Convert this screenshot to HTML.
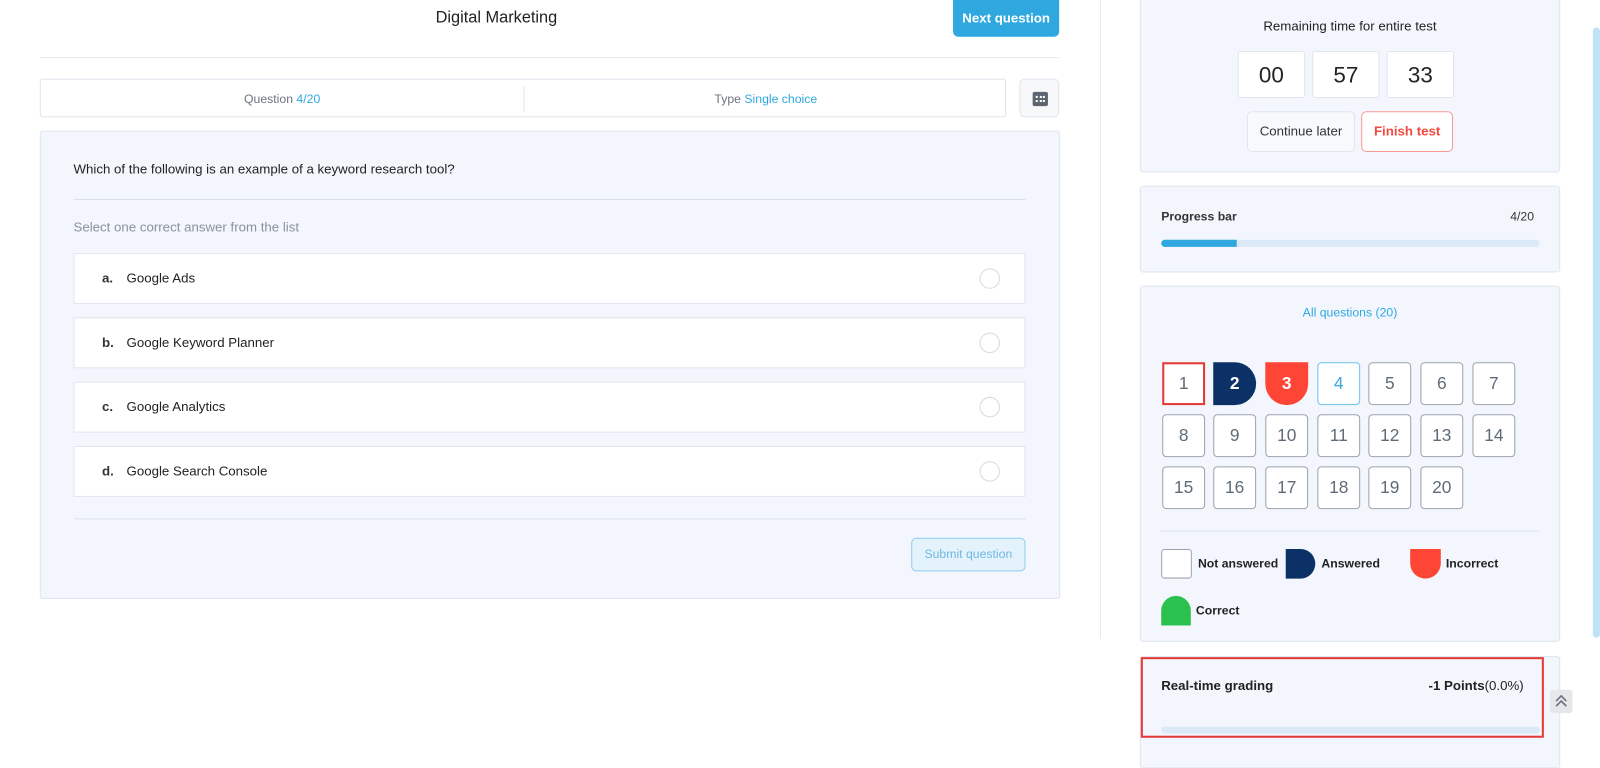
<!DOCTYPE html>
<html><head><meta charset="utf-8"><style>
*{box-sizing:border-box;margin:0;padding:0}
body{width:1600px;height:738px;overflow:hidden;background:#fff;font-family:"Liberation Sans",sans-serif;color:#1f2937;position:relative}
#w{position:absolute;left:0;top:0;width:1568px;height:724px;transform:scale(1.0204);transform-origin:0 0}
.a{position:absolute}
.card{position:absolute;background:#f3f7fd;border:1px solid #dfe5ee;border-radius:3px}
.opt{position:absolute;left:72px;width:933px;height:50px;background:#fff;border:1px solid #dfe5ee;font-size:13px;color:#222}
.opt b{position:absolute;left:27px;top:16px;font-weight:bold;color:#333;font-size:13px}
.opt span{position:absolute;left:51px;top:16px}
.opt i{position:absolute;left:887px;top:14px;width:20px;height:20px;border:1px solid #d4dbe4;border-radius:50%}
.q{position:absolute;width:42px;height:42px;background:#fff;border:1px solid #9aa3ad;border-radius:4px;font-size:17px;color:#5f6b77;text-align:center;line-height:40px}
.tb{position:absolute;top:50px;width:66px;height:46px;background:#fff;border:1px solid #e1e6ee;border-radius:3px;font-size:22px;text-align:center;line-height:46px;color:#222}
.lg{position:absolute;font-size:12px;font-weight:bold;color:#222}
</style></head><body><div id="w">
<div class="a" style="left:0;width:973px;top:9px;text-align:center;font-size:16px;color:#222">Digital Marketing</div>
<div class="a" style="left:934px;top:0;width:104px;height:36px;background:#2ea8df;border-radius:0 0 5px 5px;color:#fff;font-size:13px;font-weight:bold;text-align:center;line-height:36px">Next question</div>
<div class="a" style="left:39px;top:56px;width:999px;height:1px;background:#e3e7ee"></div>
<div class="a" style="left:39px;top:77px;width:947px;height:38px;border:1px solid #dfe5ee;border-radius:3px;font-size:12px;color:#6b7480">
 <div class="a" style="left:0;width:473px;top:12px;text-align:center">Question <span style="color:#2ea8df">4/20</span></div>
 <div class="a" style="left:473px;top:6px;width:1px;height:26px;background:#dfe5ee"></div>
 <div class="a" style="left:474px;width:473px;top:12px;text-align:center">Type <span style="color:#2ea8df">Single choice</span></div>
</div>
<div class="a" style="left:999px;top:77px;width:39px;height:38px;border:1px solid #dfe5ee;border-radius:5px;background:#f7f8fa">
 <div class="a" style="left:12px;top:12px;width:15px;height:14px;background:#5d6670;border-radius:2px"></div>
 <div class="a" style="left:15px;top:16px;width:9px;height:2px;border-left:2px solid #fff;border-right:2px solid #fff"></div>
 <div class="a" style="left:18.5px;top:16px;width:2px;height:2px;background:#fff"></div>
 <div class="a" style="left:15px;top:20px;width:9px;height:2px;border-left:2px solid #fff;border-right:2px solid #fff"></div>
 <div class="a" style="left:18.5px;top:20px;width:2px;height:2px;background:#fff"></div>
</div>
<div class="card" style="left:39px;top:128px;width:1000px;height:459px"></div>
<div class="a" style="left:72px;top:158px;font-size:13px;color:#222">Which of the following is an example of a keyword research tool?</div>
<div class="a" style="left:72px;top:195px;width:933px;height:1px;background:#dbe1ea"></div>
<div class="a" style="left:72px;top:215px;font-size:13px;color:#8a929b">Select one correct answer from the list</div>
<div class="opt" style="top:248px"><b>a.</b><span>Google Ads</span><i></i></div>
<div class="opt" style="top:311px"><b>b.</b><span>Google Keyword Planner</span><i></i></div>
<div class="opt" style="top:374px"><b>c.</b><span>Google Analytics</span><i></i></div>
<div class="opt" style="top:437px"><b>d.</b><span>Google Search Console</span><i></i></div>
<div class="a" style="left:72px;top:508px;width:933px;height:1px;background:#dbe1ea"></div>
<div class="a" style="left:893px;top:527px;width:112px;height:33px;background:#e4f2fb;border:1px solid #8ccdf0;border-radius:5px;color:#6fb8e2;font-size:12px;text-align:center;line-height:31px">Submit question</div>
<div class="a" style="left:1078px;top:0;width:1px;height:626px;background:#e6e9ee"></div>

<div class="card" style="left:1117px;top:-4px;width:412px;height:173px"></div>
<div class="a" style="left:1117px;width:412px;top:18px;text-align:center;font-size:13px;color:#222">Remaining time for entire test</div>
<div class="tb" style="left:1213px">00</div><div class="tb" style="left:1286px">57</div><div class="tb" style="left:1359px">33</div>
<div class="a" style="left:1222px;top:109px;width:106px;height:40px;border:1px solid #dfe5ee;border-radius:5px;background:#f7f9fc;font-size:13px;text-align:center;line-height:38px;color:#333">Continue later</div>
<div class="a" style="left:1334px;top:109px;width:90px;height:40px;border:1px solid #f79a94;border-radius:5px;background:#fff;font-size:13px;font-weight:bold;text-align:center;line-height:38px;color:#f04a3e">Finish test</div>

<div class="card" style="left:1117px;top:182px;width:412px;height:85px"></div>
<div class="a" style="left:1138px;top:205px;font-size:12px;font-weight:bold;color:#333">Progress bar</div>
<div class="a" style="left:1480px;top:205px;font-size:12px;color:#333">4/20</div>
<div class="a" style="left:1138px;top:235px;width:371px;height:7px;background:#dceaf7;border-radius:4px"></div>
<div class="a" style="left:1138px;top:235px;width:74px;height:7px;background:#2ea8df;border-radius:4px 0 0 4px"></div>

<div class="card" style="left:1117px;top:280px;width:412px;height:349px"></div>
<div class="a" style="left:1117px;width:412px;top:299px;text-align:center;font-size:12px;color:#2ea8df">All questions (20)</div>
<div class="q" style="left:1139px;top:355px;border:2px solid #e53935;border-radius:0;line-height:38px">1</div>
<div class="q" style="left:1189px;top:355px;background:#0c3166;border:none;border-radius:0 21px 21px 0;color:#fff;line-height:42px;font-weight:bold">2</div>
<div class="q" style="left:1240px;top:355px;background:#ff4535;border:none;border-radius:0 0 21px 21px;color:#fff;line-height:42px;font-weight:bold">3</div>
<div class="q" style="left:1291px;top:355px;border-color:#6ec2ec;color:#3ba7e0">4</div>
<div class="q" style="left:1341px;top:355px">5</div><div class="q" style="left:1392px;top:355px">6</div><div class="q" style="left:1443px;top:355px">7</div>
<div class="q" style="left:1139px;top:406px">8</div><div class="q" style="left:1189px;top:406px">9</div><div class="q" style="left:1240px;top:406px">10</div><div class="q" style="left:1291px;top:406px">11</div><div class="q" style="left:1341px;top:406px">12</div><div class="q" style="left:1392px;top:406px">13</div><div class="q" style="left:1443px;top:406px">14</div>
<div class="q" style="left:1139px;top:457px">15</div><div class="q" style="left:1189px;top:457px">16</div><div class="q" style="left:1240px;top:457px">17</div><div class="q" style="left:1291px;top:457px">18</div><div class="q" style="left:1341px;top:457px">19</div><div class="q" style="left:1392px;top:457px">20</div>
<div class="a" style="left:1138px;top:520px;width:371px;height:1px;background:#dfe5ee"></div>
<div class="a" style="left:1138px;top:538px;width:30px;height:29px;background:#fff;border:1px solid #9aa3ad;border-radius:3px"></div>
<div class="lg" style="left:1174px;top:545px">Not answered</div>
<div class="a" style="left:1260px;top:538px;width:29px;height:29px;background:#0c3166;border-radius:0 15px 15px 0"></div>
<div class="lg" style="left:1295px;top:545px">Answered</div>
<div class="a" style="left:1382px;top:538px;width:30px;height:29px;background:#ff4535;border-radius:0 0 15px 15px"></div>
<div class="lg" style="left:1417px;top:545px">Incorrect</div>
<div class="a" style="left:1138px;top:584px;width:29px;height:29px;background:#2bc14f;border-radius:15px 15px 0 0"></div>
<div class="lg" style="left:1172px;top:591px">Correct</div>

<div class="card" style="left:1117px;top:643px;width:412px;height:110px"></div>
<div class="a" style="left:1118px;top:644px;width:395px;height:79px;border:2px solid #e53935"></div>
<div class="a" style="left:1138px;top:664px;font-size:13px;font-weight:bold;color:#222">Real-time grading</div>
<div class="a" style="left:1400px;top:664px;font-size:13px;color:#222"><b>-1 Points</b>(0.0%)</div>
<div class="a" style="left:1138px;top:712px;width:371px;height:7px;background:#dceaf7;border-radius:4px"></div>
<div class="a" style="left:1519px;top:676px;width:22px;height:23px;background:#e5e7ea;border-radius:3px;text-align:center">
<svg width="12" height="14" viewBox="0 0 12 14" style="margin-top:4px"><path d="M1 7 6 2 11 7M1 12 6 7 11 12" fill="none" stroke="#6b7280" stroke-width="1.6"/></svg></div>
<div class="a" style="left:1561px;top:27px;width:7px;height:598px;background:#bfe3f5;border-radius:4px"></div>
</div></body></html>
